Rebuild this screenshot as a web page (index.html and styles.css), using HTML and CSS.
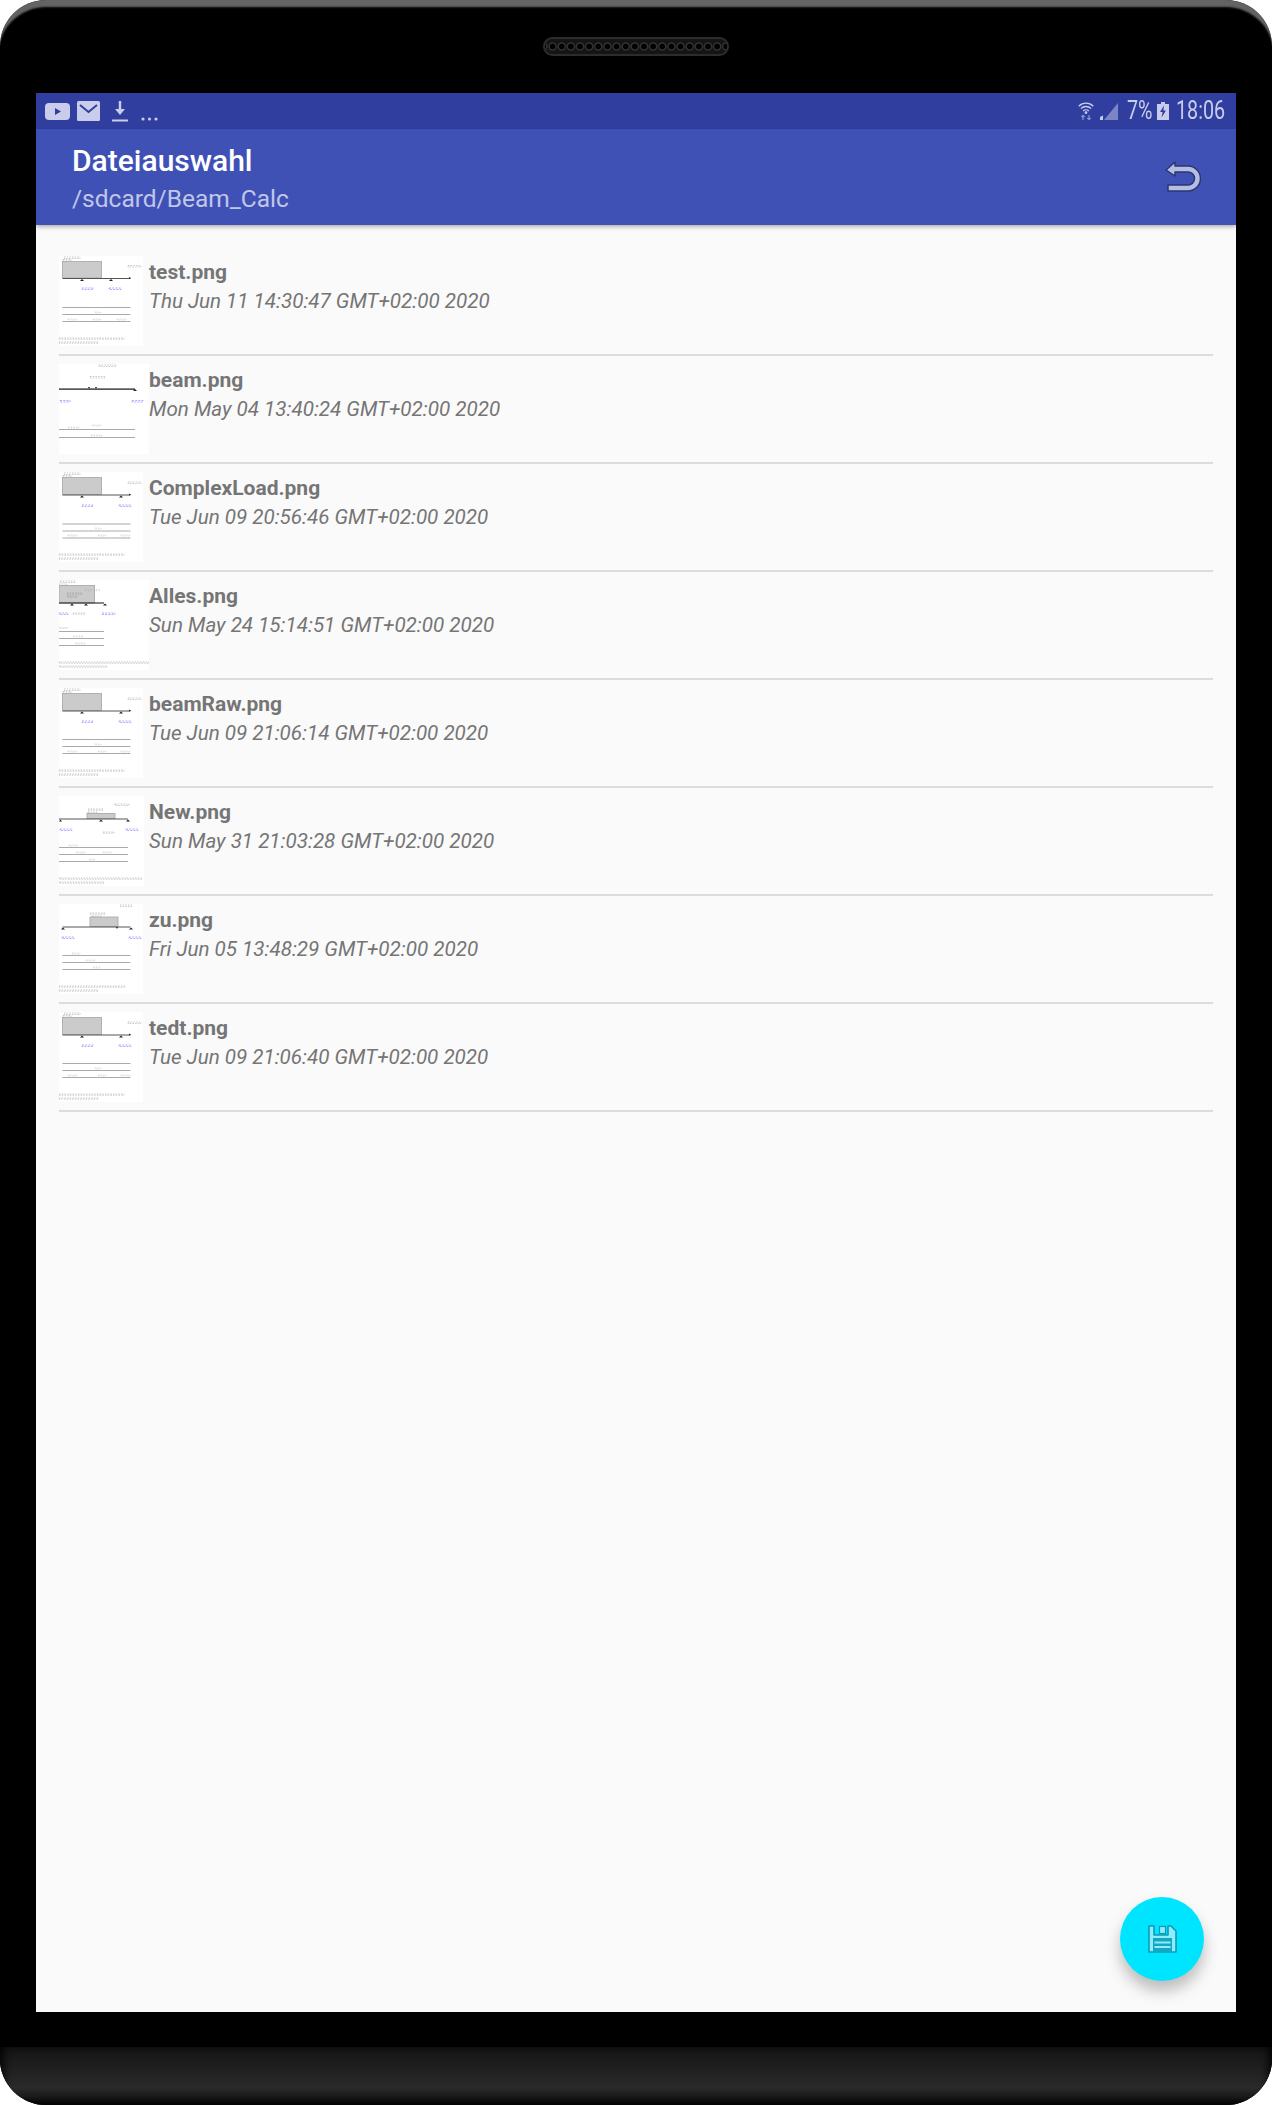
FILE: index.html
```html
<!DOCTYPE html>
<html lang="de">

<head>
    <meta charset="UTF-8">
    <title>Dateiauswahl</title>
    <link rel="stylesheet" href="styles.css">
</head>

<body>
    <div class="phone">
        <div class="bezel_top">
            <div class="speaker"></div>
        </div>

        <div class="screen">
            <div class="statusbar">
                <div class="status_left">
                    <svg class="ic_youtube" width="25" height="17" viewBox="0 0 25 17"><rect width="25" height="17" rx="4" fill="#c9cdeb"/><path d="M10 5l6 3.5-6 3.5z" fill="#303f9f"/></svg>
                    <svg class="ic_mail" width="23" height="20" viewBox="0 0 23 20"><rect width="23" height="20" rx="1.5" fill="#c9cdeb"/><path d="M3 4l8.5 7L20 4" fill="none" stroke="#303f9f" stroke-width="2"/></svg>
                    <svg class="ic_download" width="16" height="21" viewBox="0 0 16 21"><path d="M6.8 0h2.4v8H13l-5 6-5-6h3.8z" fill="#c9cdeb"/><rect y="18.5" width="16" height="2" fill="#c9cdeb"/></svg>
                    <svg class="ic_more" width="17" height="4" viewBox="0 0 17 4"><circle cx="2" cy="2" r="1.6" fill="#c9cdeb"/><circle cx="8.5" cy="2" r="1.6" fill="#c9cdeb"/><circle cx="15" cy="2" r="1.6" fill="#c9cdeb"/></svg>
                </div>
                <div class="status_right">
                    <svg class="ic_wifi" width="16" height="18" viewBox="0 0 16 18" fill="none" stroke="#c9cdeb" stroke-width="1.4"><path d="M.8 4.2a10 10 0 0 1 14.4 0"/><path d="M3 6.6a7 7 0 0 1 10 0"/><path d="M5.2 9a4 4 0 0 1 5.6 0"/><circle cx="8" cy="10.6" r=".7" fill="#c9cdeb"/><path d="M5 18v-4.5M3.4 15l1.6-1.6L6.6 15M11 13v4.5M9.4 16l1.6 1.6 1.6-1.6" stroke="#8e96cd" stroke-width="1.2"/></svg>
                    <svg class="ic_signal" width="18" height="17" viewBox="0 0 18 17"><path d="M18 0v17H4z" fill="#7b84c4"/><path d="M0 17v-3l3-1.500V17z" fill="#c9cdeb"/></svg>
                    <span class="status_pct">7%</span>
                    <svg class="ic_battery" width="12" height="18" viewBox="0 0 12 18"><path d="M4 0h4v2h4v16H0V2h4z" fill="#c9cdeb"/><path d="M7 3.500L3 10h2.600l-1 5.500L9 8.500H6.400z" fill="#303f9f"/></svg>
                    <span class="status_time">18:06</span>
                </div>
            </div>

            <header class="appbar">
                <div class="appbar_titles">
                    <h1>Dateiauswahl</h1>
                    <p>/sdcard/Beam_Calc</p>
                </div>
                <svg class="ic_back" width="36" height="33" viewBox="0 0 36 33"><path d="M1 9l9-8v4h13a12.500 12.500 0 0 1 0 25H3v-6h20a6.500 6.500 0 0 0 0-13H10v4z" fill="#b4bde2" stroke="#2c3672" stroke-width="1.500" stroke-linejoin="round"/></svg>
            </header>

            <main class="filelist">
                <article class="fileitem">
                    <div class="thumb">
                        <svg width="84" height="90" viewBox="0 0 84 90">
                            <rect width="84" height="90" fill="#fff"/>
                            <rect class="t_ink" x="5" y="1" width="16" height="1.500"/><rect class="t_ink" x="4" y="3.500" width="8" height="1.500"/>
                            <rect class="t_box" x="3.500" y="5.500" width="39" height="16.500"/>
                            <rect class="t_ink" x="69" y="9.500" width="13" height="1.500"/>
                            <rect class="t_beam" x="3.500" y="22" width="68" height="1"/>
                            <path class="t_mark" d="M21 25l2-2 2 2zM50 25l2-2 2 2zM70 21l2 1-2 1z"/>
                            <rect class="t_blue" x="23" y="32" width="11" height="1.500"/><rect class="t_blue" x="50" y="32" width="12" height="1.500"/>
                            <rect class="t_line" x="3.500" y="51" width="68" height="1"/><rect class="t_line" x="3.500" y="58" width="68" height="1"/><rect class="t_line" x="3.500" y="65" width="68" height="1"/>
                            <rect class="t_dim" x="36" y="56" width="6" height="1"/><rect class="t_dim" x="9" y="63" width="9" height="1"/><rect class="t_dim" x="34" y="63" width="8" height="1"/><rect class="t_dim" x="58" y="63" width="9" height="1"/>
                            <rect class="t_ink" x="0" y="82" width="65" height="1.200"/><rect class="t_ink" x="0" y="86" width="39" height="1.200"/>
                        </svg>
                    </div>
                    <div class="fileinfo">
                        <h2>test.png</h2>
                        <p>Thu Jun 11 14:30:47 GMT+02:00 2020</p>
                    </div>
                </article>

                <article class="fileitem">
                    <div class="thumb">
                        <svg width="90" height="90" viewBox="0 0 90 90">
                            <rect width="90" height="90" fill="#fff"/>
                            <rect class="t_ink" x="40" y="1" width="17" height="1.500"/>
                            <rect class="t_ink" x="31" y="12.500" width="15" height="1.500"/>
                            <rect class="t_beam_dark" x="0" y="24.500" width="76" height="1.200"/>
                            <path class="t_mark" d="M29 23l2 0-1 2zM36 23l2 0-1 2zM74 27l2-2 2 2z"/>
                            <rect class="t_blue" x="1" y="36.500" width="10" height="1.500"/><rect class="t_blue" x="73" y="36.500" width="11" height="1.500"/>
                            <rect class="t_line" x="0" y="65" width="76" height="1"/><rect class="t_line" x="0" y="73" width="76" height="1"/>
                            <rect class="t_dim" x="33" y="61" width="9" height="1"/><rect class="t_dim" x="9" y="63" width="11" height="1"/><rect class="t_dim" x="32" y="71" width="11" height="1"/>
                        </svg>
                    </div>
                    <div class="fileinfo">
                        <h2>beam.png</h2>
                        <p>Mon May 04 13:40:24 GMT+02:00 2020</p>
                    </div>
                </article>

                <article class="fileitem">
                    <div class="thumb">
                        <svg width="84" height="90" viewBox="0 0 84 90">
                            <rect width="84" height="90" fill="#fff"/>
                            <rect class="t_ink" x="5" y="1" width="16" height="1.500"/><rect class="t_ink" x="4" y="3.500" width="8" height="1.500"/>
                            <rect class="t_box" x="3.500" y="5.500" width="39" height="17"/>
                            <rect class="t_ink" x="69" y="10" width="13" height="1.500"/>
                            <rect class="t_beam" x="3.500" y="22.500" width="68" height="1"/>
                            <path class="t_mark" d="M21 25.500l2-2 2 2zM60 25.500l2-2 2 2zM70 21.500l2 1-2 1z"/>
                            <rect class="t_blue" x="23" y="33" width="11" height="1.500"/><rect class="t_blue" x="60" y="33" width="12" height="1.500"/>
                            <rect class="t_line" x="3.500" y="51.500" width="68" height="1"/><rect class="t_line" x="3.500" y="58.500" width="68" height="1"/><rect class="t_line" x="3.500" y="65.500" width="68" height="1"/>
                            <rect class="t_dim" x="36" y="56" width="6" height="1"/><rect class="t_dim" x="9" y="63" width="9" height="1"/><rect class="t_dim" x="39" y="63" width="8" height="1"/><rect class="t_dim" x="62" y="63" width="9" height="1"/>
                            <rect class="t_ink" x="0" y="82" width="65" height="1.200"/><rect class="t_ink" x="0" y="86" width="39" height="1.200"/>
                        </svg>
                    </div>
                    <div class="fileinfo">
                        <h2>ComplexLoad.png</h2>
                        <p>Tue Jun 09 20:56:46 GMT+02:00 2020</p>
                    </div>
                </article>

                <article class="fileitem">
                    <div class="thumb">
                        <svg width="90" height="90" viewBox="0 0 90 90">
                            <rect width="90" height="90" fill="#fff"/>
                            <rect class="t_ink" x="1" y="1" width="15" height="1.500"/><rect class="t_ink" x="0" y="4" width="8" height="1.500"/>
                            <rect class="t_box" x="0" y="5.500" width="35.500" height="17.500"/>
                            <rect class="t_dim" x="26" y="9.500" width="15" height="1.200"/>
                            <rect class="t_ink" x="8" y="13" width="15" height="1.200"/><rect class="t_ink" x="8" y="16" width="10" height="1.200"/>
                            <rect class="t_beam_dark" x="0" y="22.500" width="45" height="1"/>
                            <path class="t_mark" d="M11 25.500l2-2 2 2zM25 25.500l2-2 2 2zM44 25.500l2-2 2 2z"/>
                            <rect class="t_blue" x="0" y="33" width="9" height="1.500"/><rect class="t_ink" x="14" y="33" width="12" height="1.200"/><rect class="t_blue" x="43" y="33" width="13" height="1.500"/>
                            <rect class="t_dim" x="0" y="47.500" width="9" height="1"/>
                            <rect class="t_line" x="0" y="51" width="45" height="1"/><rect class="t_line" x="0" y="58" width="45" height="1"/><rect class="t_line" x="0" y="65" width="45" height="1"/>
                            <rect class="t_dim" x="14" y="56" width="10" height="1"/><rect class="t_dim" x="16" y="63" width="10" height="1"/>
                            <rect class="t_ink" x="0" y="82" width="90" height="1.200"/><rect class="t_ink" x="0" y="86" width="48" height="1.200"/>
                        </svg>
                    </div>
                    <div class="fileinfo">
                        <h2>Alles.png</h2>
                        <p>Sun May 24 15:14:51 GMT+02:00 2020</p>
                    </div>
                </article>

                <article class="fileitem">
                    <div class="thumb">
                        <svg width="84" height="90" viewBox="0 0 84 90">
                            <rect width="84" height="90" fill="#fff"/>
                            <rect class="t_ink" x="5" y="1" width="16" height="1.500"/><rect class="t_ink" x="4" y="3.500" width="8" height="1.500"/>
                            <rect class="t_box" x="3.500" y="5.500" width="39" height="17"/>
                            <rect class="t_ink" x="69" y="10" width="13" height="1.500"/>
                            <rect class="t_beam" x="3.500" y="22.500" width="68" height="1"/>
                            <path class="t_mark" d="M21 25.500l2-2 2 2zM60 25.500l2-2 2 2zM70 21.500l2 1-2 1z"/>
                            <rect class="t_blue" x="23" y="33" width="11" height="1.500"/><rect class="t_blue" x="60" y="33" width="12" height="1.500"/>
                            <rect class="t_line" x="3.500" y="51" width="68" height="1"/><rect class="t_line" x="3.500" y="58" width="68" height="1"/><rect class="t_line" x="3.500" y="65" width="68" height="1"/>
                            <rect class="t_dim" x="36" y="56" width="6" height="1"/><rect class="t_dim" x="9" y="63" width="9" height="1"/><rect class="t_dim" x="39" y="63" width="8" height="1"/><rect class="t_dim" x="62" y="63" width="9" height="1"/>
                            <rect class="t_ink" x="0" y="82" width="65" height="1.200"/><rect class="t_ink" x="0" y="86" width="39" height="1.200"/>
                        </svg>
                    </div>
                    <div class="fileinfo">
                        <h2>beamRaw.png</h2>
                        <p>Tue Jun 09 21:06:14 GMT+02:00 2020</p>
                    </div>
                </article>

                <article class="fileitem">
                    <div class="thumb">
                        <svg width="85" height="90" viewBox="0 0 85 90">
                            <rect width="85" height="90" fill="#fff"/>
                            <rect class="t_ink" x="56" y="8" width="14" height="1.500"/>
                            <rect class="t_ink" x="29" y="13" width="15" height="1.200"/><rect class="t_ink" x="29" y="16" width="9" height="1.200"/>
                            <rect class="t_box" x="28" y="17.500" width="28" height="5"/>
                            <rect class="t_beam" x="0" y="22.500" width="69" height="1"/>
                            <path class="t_mark" d="M0 25.500l1.500-2 1.500 2zM40 25.500l2-2 2 2zM67 25.500l2-2 2 2z"/>
                            <rect class="t_blue" x="1" y="33" width="12" height="1.500"/><rect class="t_blue" x="67" y="33" width="12" height="1.500"/>
                            <rect class="t_ink" x="44" y="36" width="11" height="1.200"/>
                            <rect class="t_line" x="0" y="51" width="69" height="1"/><rect class="t_line" x="0" y="58" width="69" height="1"/><rect class="t_line" x="0" y="65" width="69" height="1"/>
                            <rect class="t_dim" x="10" y="49" width="9" height="1"/><rect class="t_dim" x="17" y="56" width="9" height="1"/><rect class="t_dim" x="44" y="56" width="9" height="1"/><rect class="t_dim" x="30" y="63" width="6" height="1"/>
                            <rect class="t_ink" x="0" y="82" width="83" height="1.200"/><rect class="t_ink" x="0" y="86" width="45" height="1.200"/>
                        </svg>
                    </div>
                    <div class="fileinfo">
                        <h2>New.png</h2>
                        <p>Sun May 31 21:03:28 GMT+02:00 2020</p>
                    </div>
                </article>

                <article class="fileitem">
                    <div class="thumb">
                        <svg width="84" height="90" viewBox="0 0 84 90">
                            <rect width="84" height="90" fill="#fff"/>
                            <rect class="t_ink" x="61" y="1" width="12" height="1.500"/>
                            <rect class="t_ink" x="31" y="9" width="15" height="1.200"/><rect class="t_ink" x="33" y="12" width="9" height="1.200"/>
                            <rect class="t_box" x="31" y="13" width="28" height="9.500"/>
                            <rect class="t_beam" x="3.500" y="22.500" width="68" height="1"/>
                            <path class="t_mark" d="M2 25.500l2-2 2 2zM57 23l2 0-1 2zM70 25.500l2-2 2 2z"/>
                            <rect class="t_blue" x="3" y="33" width="12" height="1.500"/><rect class="t_blue" x="70" y="33" width="12" height="1.500"/>
                            <rect class="t_line" x="3.500" y="51" width="68" height="1"/><rect class="t_line" x="3.500" y="58" width="68" height="1"/><rect class="t_line" x="3.500" y="65" width="68" height="1"/>
                            <rect class="t_dim" x="13" y="49" width="8" height="1"/><rect class="t_dim" x="27" y="56" width="9" height="1"/><rect class="t_dim" x="34" y="63" width="7" height="1"/>
                            <rect class="t_ink" x="0" y="82" width="66" height="1.200"/><rect class="t_ink" x="0" y="86" width="39" height="1.200"/>
                        </svg>
                    </div>
                    <div class="fileinfo">
                        <h2>zu.png</h2>
                        <p>Fri Jun 05 13:48:29 GMT+02:00 2020</p>
                    </div>
                </article>

                <article class="fileitem">
                    <div class="thumb">
                        <svg width="84" height="90" viewBox="0 0 84 90">
                            <rect width="84" height="90" fill="#fff"/>
                            <rect class="t_ink" x="5" y="1" width="16" height="1.500"/><rect class="t_ink" x="4" y="3.500" width="8" height="1.500"/>
                            <rect class="t_box" x="3.500" y="5.500" width="39" height="17"/>
                            <rect class="t_ink" x="69" y="10" width="13" height="1.500"/>
                            <rect class="t_beam" x="3.500" y="22.500" width="68" height="1"/>
                            <path class="t_mark" d="M21 25.500l2-2 2 2zM60 25.500l2-2 2 2zM70 21.500l2 1-2 1z"/>
                            <rect class="t_blue" x="23" y="33" width="11" height="1.500"/><rect class="t_blue" x="60" y="33" width="12" height="1.500"/>
                            <rect class="t_line" x="3.500" y="51" width="68" height="1"/><rect class="t_line" x="3.500" y="58" width="68" height="1"/><rect class="t_line" x="3.500" y="65" width="68" height="1"/>
                            <rect class="t_dim" x="36" y="56" width="6" height="1"/><rect class="t_dim" x="9" y="63" width="9" height="1"/><rect class="t_dim" x="39" y="63" width="8" height="1"/><rect class="t_dim" x="62" y="63" width="9" height="1"/>
                            <rect class="t_ink" x="0" y="82" width="65" height="1.200"/><rect class="t_ink" x="0" y="86" width="39" height="1.200"/>
                        </svg>
                    </div>
                    <div class="fileinfo">
                        <h2>tedt.png</h2>
                        <p>Tue Jun 09 21:06:40 GMT+02:00 2020</p>
                    </div>
                </article>
            </main>

            <button class="fab">
                <svg width="30" height="30" viewBox="0 0 30 30"><path d="M2 2h5v9h14V2h3l5 5v21H2z" fill="#8fecfb" stroke="#0d9cb8" stroke-width="1.600" stroke-linejoin="round"/><rect x="12.500" y="2.500" width="6" height="7" fill="#8fecfb" stroke="#0d9cb8" stroke-width="1.200"/><rect x="6" y="14" width="19" height="14" fill="#12a7c4"/><rect x="7.500" y="17.500" width="16" height="2" fill="#8fecfb"/><rect x="7.500" y="22" width="16" height="2" fill="#8fecfb"/></svg>
            </button>
        </div>

        <div class="bezel_bottom"></div>
    </div>
</body>

</html>
```

FILE: styles.css
```css
* {
    box-sizing: border-box;
}

html,
body {
    margin: 0;
    padding: 0;
    background-color: white;
}

body {
    width: 1272px;
    height: 2105px;
    overflow: hidden;
    font-family: Roboto, sans-serif;
}

.phone {
    display: flex;
    flex-direction: column;
    height: 2105px;
    background-color: black;
    border-radius: 46px;
    overflow: hidden;
    box-shadow: inset 0 9px 2px -2px #646464;
}

/* Top of the device */

.bezel_top {
    display: flex;
    justify-content: center;
    height: 93px;
    padding-top: 37px;
}

.speaker {
    width: 186px;
    height: 19px;
    padding: 0 6px;
    border-radius: 10px;
    border: 2px solid #2c2c2c;
    background-color: #0c0c0c;
    background-image: radial-gradient(circle at center, black 0, black 2.500px, #444 3.500px, #151515 4.500px);
    background-size: 9.150px 15px;
    background-position: 3px 0;
    background-clip: padding-box;
}

.screen {
    position: relative;
    display: flex;
    flex-direction: column;
    height: 1919px;
    margin: 0 36px;
    background-color: #fafafa;
}

/* Status bar */

.statusbar {
    display: flex;
    justify-content: space-between;
    align-items: center;
    height: 36px;
    padding: 0 12px 0 9px;
    background-color: #303f9f;
    color: #c9cdeb;
}

.status_left,
.status_right {
    display: flex;
    align-items: center;
}

.ic_mail {
    margin-left: 7px;
}

.ic_download {
    margin-left: 12px;
}

.ic_more {
    margin-left: 13px;
    margin-top: 16px;
}

.ic_signal {
    margin-left: 6px;
}

.status_pct,
.status_time {
    display: inline-block;
    font-size: 25px;
    line-height: 36px;
    white-space: nowrap;
    transform: scaleX(0.79);
    transform-origin: left center;
}

.status_pct {
    width: 24px;
    margin-left: 9px;
}

.ic_battery {
    margin-left: 6px;
}

.status_time {
    width: 48px;
    margin-left: 7px;
}

/* App bar */

.appbar {
    position: relative;
    display: flex;
    justify-content: space-between;
    align-items: flex-start;
    height: 96px;
    padding: 16px 35px 0 36px;
    background-color: #3f51b5;
    box-shadow: 0 2px 4px rgba(0, 0, 0, 0.3);
}

.appbar h1 {
    margin: 0;
    font-size: 30px;
    font-weight: 500;
    line-height: 32px;
    color: white;
}

.appbar p {
    margin: 8px 0 0;
    font-size: 24.500px;
    line-height: 28px;
    color: #c0c7e8;
}

.ic_back {
    margin-top: 16px;
}

/* File list */

.filelist {
    padding: 23px 23px 0;
}

.fileitem {
    display: flex;
    height: 108px;
    padding-top: 8px;
    border-bottom: 2px solid #dcdcdc;
}

.thumb {
    flex: 0 0 90px;
    height: 90px;
}

.thumb svg {
    display: block;
    filter: blur(0.4px);
}

.fileinfo h2 {
    margin: 3px 0 0;
    font-size: 21px;
    font-weight: 700;
    line-height: 26px;
    color: #757575;
}

.fileinfo p {
    margin: 3px 0 0;
    font-size: 20.600px;
    font-style: italic;
    line-height: 26px;
    color: #757575;
}

/* Thumbnail drawing */

.t_box {
    fill: #cbcbcb;
    stroke: #a5a5a5;
    stroke-width: 0.800;
}

.t_beam {
    fill: #555;
}

.t_beam_dark {
    fill: #111;
}

.t_line {
    fill: #aaa;
}

.t_blue {
    fill: none;
    stroke: #5a5aff;
    stroke-width: 0.500;
    stroke-dasharray: 2 1.200;
}

.t_ink {
    fill: none;
    stroke: #777;
    stroke-width: 0.400;
    stroke-dasharray: 1.500 1.200;
}

.t_mark {
    fill: #222;
}

.t_dim {
    fill: none;
    stroke: #aaa;
    stroke-width: 0.400;
    stroke-dasharray: 1.500 1.200;
}

/* Save button */

.fab {
    position: absolute;
    right: 32px;
    bottom: 31px;
    display: flex;
    justify-content: center;
    align-items: center;
    width: 84px;
    height: 84px;
    padding: 0;
    border: none;
    border-radius: 50%;
    background-color: #00e5ff;
    box-shadow: 0 10px 15px rgba(0, 0, 0, 0.25);
}

/* Bottom of the device */

.bezel_bottom {
    height: 58px;
    margin-top: 35px;
    background: linear-gradient(#141414, #2a2a2a 70%, #0d0d0d);
    box-shadow: inset 0 -4px 6px rgba(0, 0, 0, 0.6), inset 8px 0 8px -4px rgba(0, 0, 0, 0.7), inset -8px 0 8px -4px rgba(0, 0, 0, 0.7);
}
```
